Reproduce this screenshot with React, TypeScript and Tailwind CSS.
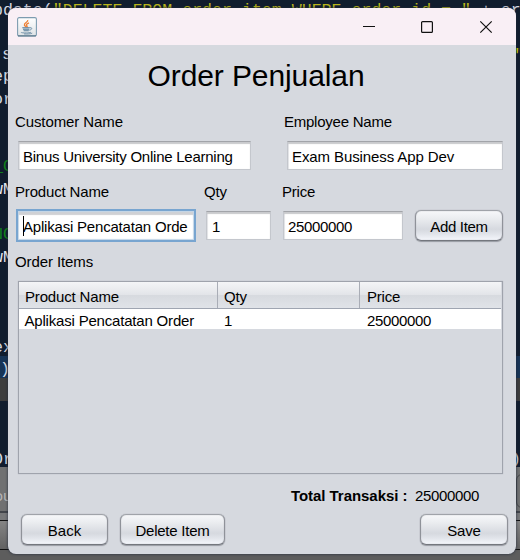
import React from "react";

const fieldBase =
  "flex items-center overflow-hidden whitespace-nowrap border border-[#c4c7cd] border-t-[#a2a4a9] bg-white shadow-[inset_0_2px_1px_#c9cacd,inset_1px_0_1px_#e4e5e8]";

function Button({ label, className }: { label: string; className: string }) {
  return (
    <button
      className={`${className} flex items-center justify-center whitespace-nowrap rounded-[6px] border border-t-[#a0a3a9] border-x-[#8f9299] border-b-[#74777e] bg-[linear-gradient(#f8f9fb_0%,#eceef1_25%,#d6d9df_62%,#dfe2e8_75%,#f7f9fe_100%)] bg-origin-border leading-[18px] shadow-[0_0_1px_#8f9299,0_1px_1px_#9a9da5,inset_0_0_1px_#9a9da5]`}
    >
      {label}
    </button>
  );
}

function JavaIcon() {
  return (
    <svg className="ml-[9px] h-5 w-5" viewBox="0 0 20 20" fill="none">
      <defs>
        <linearGradient id="tile" x1="0" y1="0" x2="0" y2="1">
          <stop offset="0" stopColor="#ffffff" />
          <stop offset="1" stopColor="#dfe3e6" />
        </linearGradient>
      </defs>
      <rect x="0.6" y="0.6" width="18.8" height="18.4" rx="1.5" fill="url(#tile)" stroke="#7d9cb0" strokeWidth="1.1" />
      <path d="M1 18.9H19" stroke="#4d6b80" />
      <path d="M10.7 3C11.6 5 7 6 7.4 8C7.6 9 8.7 9.4 9 10M12 5.8C9 7 9 8 10 9C10.5 9.6 10 10 9.8 10.4" stroke="#ee8136" strokeWidth="1.3" />
      <path d="M5.3 10.8H12.8M6 12.3H12.2M6.6 13.8H11.8" stroke="#557c99" strokeWidth="1.1" />
      <path d="M12.8 10.8C15.5 10.2 15.5 12.6 12.3 13.2" stroke="#6c8fa8" />
      <path d="M4.2 15.2C3.2 16 12 16.4 14 15.2M7 16.9C10 17.2 13.5 17 15.2 16.1" stroke="#6788a1" strokeWidth="0.9" />
    </svg>
  );
}

const fragments = [
  { text: "s", cls: "left-[2px] top-[45px] text-[#d4d9e2]" },
  { text: "ep", cls: "left-[-7px] top-[67px] text-[#d4d9e2]" },
  { text: "or", cls: "left-[-7px] top-[90px] text-[#d4d9e2]" },
  { text: "_O", cls: "left-[-7px] top-[157px] text-[#10801a]" },
  { text: "wM", cls: "left-[-7px] top-[180px] text-[#e6e9ef]" },
  { text: "NO", cls: "left-[-7px] top-[225px] text-[#10801a]" },
  { text: "wM", cls: "left-[-7px] top-[248px] text-[#e6e9ef]" },
  { text: "ex", cls: "left-[-7px] top-[338px] text-[#d4d9e2]" },
  { text: ")", cls: "left-[0px] top-[360px] text-[#d4d9e2]" },
  { text: "Or", cls: "left-[-7px] top-[450px] text-[#d4d9e2]" },
  { text: ")", cls: "left-[511px] top-[450px] text-[#d4d9e2]" },
  { text: "\"", cls: "left-[514px] top-[46px] text-[#d3cf00]" },
];

function EditorBackdrop() {
  return (
    <div className="absolute inset-0 flex flex-col overflow-hidden bg-[#111d2e] font-['Liberation_Mono',monospace] text-[16.6px] leading-[20px]">
      <div className="h-[356px] shrink-0" />
      <div className="h-[22px] shrink-0 bg-[#173456]" />
      <div className="h-[23px] shrink-0 bg-[#3d3d3d]" />
      <div className="h-[66px] shrink-0" />
      <div className="h-[46px] shrink-0 border-b-2 border-[#42454b] bg-[#707172]" />
      <div className="h-[8px] shrink-0 border-b border-[#111] bg-[#77787a]" />
      <div className="h-[29px] shrink-0 border-b border-[#111] bg-linear-to-b from-[#858585] to-[#626262]" />
      <div className="flex-1 bg-[#5d5d5d]" />
      <div className="absolute left-[-7px] top-[1px] whitespace-pre text-[#d4d9e2]">
        pdate(<span className="text-[#b9b51c]">"DELETE FROM order_item WHERE order_id = "</span> + or
      </div>
      {fragments.map((f, i) => (
        <span key={i} className={`absolute ${f.cls}`}>
          {f.text}
        </span>
      ))}
      <span className="absolute left-[-6px] top-[485px] font-['Noto_Sans',sans-serif] text-[15px] text-[#b5b5b5]">ou</span>
      <div className="absolute left-[516px] top-[474px] h-[34px] w-3 rounded-l-md border border-[#45474b]" />
    </div>
  );
}

export default function App() {
  return (
    <div className="relative h-[560px] w-[520px] overflow-hidden font-['Liberation_Sans',Arial,sans-serif] text-[15px] leading-[18px] text-black">
      <EditorBackdrop />
      <div className="relative ml-[8px] w-[508px] pt-[8px]">
        <main className="flex h-[546px] flex-col overflow-hidden rounded-[8px] bg-[#d6d9df] shadow-[0_0_3px_#20283a]">
          <header className="flex h-[37px] shrink-0 items-center justify-between bg-[#f9eff5]">
            <JavaIcon />
            <svg className="mr-[20px] h-[14px] w-[134px]" viewBox="0 0 134 14" fill="none" stroke="#111" strokeWidth="1.2">
              <path d="M1 6.5H13" />
              <rect x="59.6" y="1.6" width="10.8" height="10.8" rx="1" />
              <path d="M118.3 1.3L129.7 12.7M129.7 1.3L118.3 12.7" />
            </svg>
          </header>

          <h1 className="ml-[139.5px] mt-[14px] h-[34px] text-[30px] leading-[34px] tracking-[-0.1px]">Order Penjualan</h1>

          <div className="mt-[20px] flex pl-[7px]">
            <span className="w-[269px] tracking-[-0.1px]">Customer Name</span>
            <span className="tracking-[-0.24px]">Employee Name</span>
          </div>
          <div className="mt-[10px] flex gap-[36px] pl-[10px]">
            <div className={`${fieldBase} h-[29px] w-[233px] pl-[4px] pt-[2px] tracking-[-0.25px]`}>Binus University Online Learning</div>
            <div className={`${fieldBase} h-[29px] w-[216px] pl-[4px] pt-[2px] tracking-[-0.1px]`}>Exam Business App Dev</div>
          </div>

          <div className="mt-[13px] flex pl-[7px]">
            <span className="w-[189px] tracking-[-0.16px]">Product Name</span>
            <span className="w-[78px] tracking-[-0.2px]">Qty</span>
            <span className="tracking-[-0.2px]">Price</span>
          </div>
          <div className="mt-[8px] flex h-[33px] items-center pl-[8px]">
            <div className="flex h-[33px] w-[180px] items-center border-2 border-[#78a5d0] bg-white p-px shadow-[inset_0_0_1px_1px_#c3d5e7,inset_0_4px_1px_#d0d1d4]">
              <div className="ml-[4px] mt-[1px] h-[20px] w-[165px] overflow-hidden whitespace-nowrap border-l border-black leading-[21px]">
                <span className="-ml-px tracking-[-0.2px]">Aplikasi Pencatatan Order</span>
              </div>
            </div>
            <div className={`${fieldBase} ml-[10px] h-[29px] w-[65px] pl-[5px] pt-[2px]`}>1</div>
            <div className={`${fieldBase} ml-[12px] h-[29px] w-[120px] pl-[4px] pt-[2px] tracking-[-0.35px]`}>25000000</div>
            <Button label="Add Item" className="ml-[12px] h-[31px] w-[88px] pt-[2px] tracking-[-0.3px]" />
          </div>

          <div className="mt-[11px] pl-[7px] tracking-[-0.1px]">Order Items</div>
          <section className="ml-[10px] mt-[10px] flex h-[193px] w-[485px] flex-col border border-[#9fa3ac] pr-px shadow-[0_0_1px_#aeb2bb]">
            <div className="flex h-[27px] shrink-0 border-b border-[#9fa5b1] bg-[linear-gradient(#f4f5f7,#e3e5e9_48%,#d7dadf_52%,#e0e3e8)] leading-[27px]">
              <div className="w-[199px] border-r border-[#a9adb6] pl-[6px] pt-px tracking-[-0.16px]">Product Name</div>
              <div className="w-[142px] border-r border-[#a9adb6] pl-[6px] pt-px tracking-[-0.2px]">Qty</div>
              <div className="pl-[7px] pt-px tracking-[-0.2px]">Price</div>
            </div>
            <div className="flex h-[20px] shrink-0 bg-white leading-[24px]">
              <div className="w-[199px] pl-[5.5px] tracking-[-0.19px]">Aplikasi Pencatatan Order</div>
              <div className="w-[142px] pl-[6px]">1</div>
              <div className="pl-[7px] tracking-[-0.35px]">25000000</div>
            </div>
          </section>

          <div className="mt-[13px] flex h-[18px] pl-[283px]">
            <b className="w-[124px] whitespace-nowrap tracking-[-0.05px]">Total Transaksi :</b>
            <span className="tracking-[-0.35px]">25000000</span>
          </div>
          <footer className="mt-[9px] flex pl-[13px] pr-[8px]">
            <Button label="Back" className="h-[31px] w-[87px] pt-[2px]" />
            <Button label="Delete Item" className="ml-[12px] h-[31px] w-[105px] pt-[2px] tracking-[-0.25px]" />
            <Button label="Save" className="ml-auto h-[31px] w-[88px] pt-[2px] tracking-[-0.2px]" />
          </footer>
        </main>
      </div>
    </div>
  );
}
